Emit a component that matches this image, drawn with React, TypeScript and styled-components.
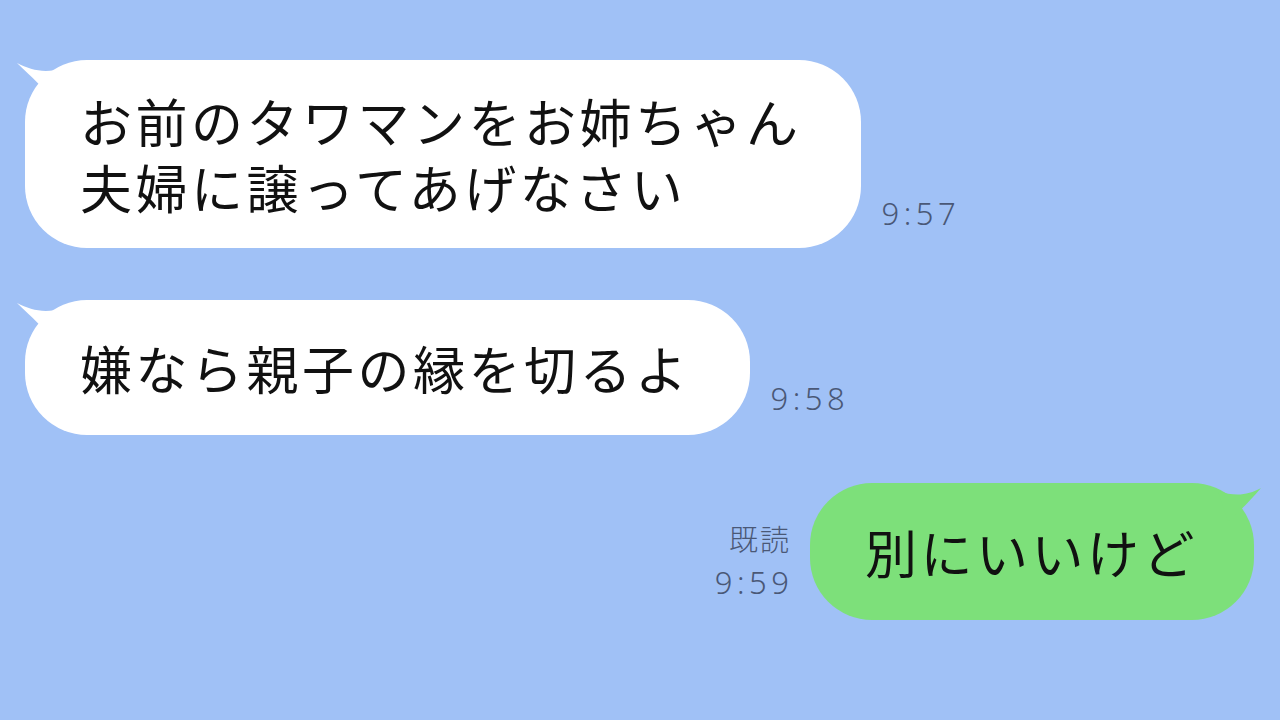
import React from 'react';
import styled, { createGlobalStyle } from 'styled-components';

const GlobalStyle = createGlobalStyle`
  html, body {
    margin: 0;
    padding: 0;
    background: #a0c1f6;
  }
  body {
    font-family: "Noto Sans CJK JP", "Noto Sans", sans-serif;
  }
`;

const Screen = styled.div`
  width: 1280px;
  height: 720px;
  overflow: hidden;
  background: #a0c1f6;
  display: flex;
  flex-direction: column;
  padding-top: 60px;
  box-sizing: border-box;
`;

const Row = styled.div<{ $mine?: boolean; $gap: number }>`
  display: flex;
  flex-direction: ${(p) => (p.$mine ? 'row-reverse' : 'row')};
  align-items: flex-end;
  gap: 21px;
  padding: 0 26px 0 25px;
  margin-bottom: ${(p) => p.$gap}px;
`;

const Bubble = styled.div<{ $mine?: boolean; $height: number }>`
  position: relative;
  height: ${(p) => p.$height}px;
  box-sizing: border-box;
  display: flex;
  flex-direction: column;
  justify-content: center;
  padding: 0 ${(p) => (p.$mine ? 56 : 59)}px 0 55px;
  border-radius: 62px;
  background: ${(p) => (p.$mine ? '#7de07a' : '#ffffff')};
  color: #111;
  font-size: 52px;
  line-height: 66px;
  letter-spacing: 3.5px;
  white-space: nowrap;
`;

const Tail = styled.svg<{ $mine?: boolean }>`
  position: absolute;
  top: -2px;
  ${(p) => (p.$mine ? 'right: -14px;' : 'left: -12px;')}
  width: 60px;
  height: 50px;
  overflow: visible;
`;

const Meta = styled.div<{ $bottom: number }>`
  display: flex;
  flex-direction: column;
  align-items: flex-end;
  gap: 8px;
  margin-bottom: ${(p) => p.$bottom}px;
  color: #4a5876;
  font-family: "Noto Sans", "Noto Sans CJK JP", sans-serif;
`;

const Read = styled.span`
  font-family: "Noto Sans CJK JP", sans-serif;
  font-size: 29px;
  line-height: 36px;
  letter-spacing: 2px;
  font-weight: 300;
  margin-right: -2px;
`;

const Time = styled.span`
  font-size: 31px;
  line-height: 36px;
  letter-spacing: 4.5px;
  font-weight: 300;
  margin-right: -4.5px;
`;

function TheirTail() {
  return (
    <Tail viewBox="0 0 60 50">
      <path d="M4 5 C18 12 32 16 50 10 L40 40 C30 30 20 20 4 5 Z" fill="#ffffff" />
    </Tail>
  );
}

function MyTail() {
  return (
    <Tail $mine viewBox="0 0 60 50">
      <path d="M53 7 C40 14 28 16 10 10 L20 40 C32 30 42 20 53 7 Z" fill="#7de07a" />
    </Tail>
  );
}

export default function App() {
  return (
    <>
      <GlobalStyle />
      <Screen>
        <Row $gap={52}>
          <Bubble $height={188}>
            <TheirTail />
            <div>お前のタワマンをお姉ちゃん</div>
            <div>夫婦に譲ってあげなさい</div>
          </Bubble>
          <Meta $bottom={17}>
            <Time>9:57</Time>
          </Meta>
        </Row>
        <Row $gap={48}>
          <Bubble $height={135}>
            <TheirTail />
            <div>嫌なら親子の縁を切るよ</div>
          </Bubble>
          <Meta $bottom={19}>
            <Time>9:58</Time>
          </Meta>
        </Row>
        <Row $mine $gap={0}>
          <Bubble $mine $height={137}>
            <MyTail />
            <div>別にいいけど</div>
          </Bubble>
          <Meta $bottom={20}>
            <Read>既読</Read>
            <Time>9:59</Time>
          </Meta>
        </Row>
      </Screen>
    </>
  );
}
